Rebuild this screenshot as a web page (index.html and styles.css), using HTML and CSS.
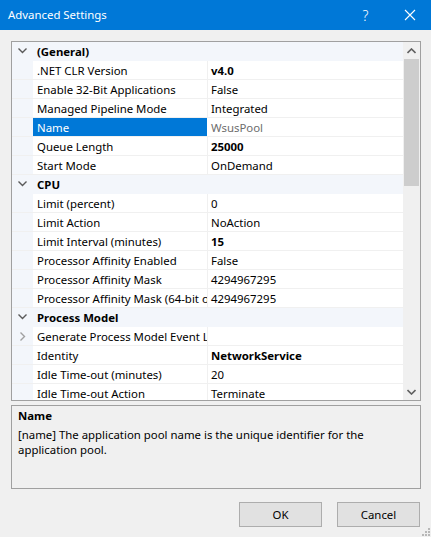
FILE: index.html
```html
<!DOCTYPE html>
<html>
<head>
<meta charset="utf-8">
<link rel="stylesheet" href="styles.css">
</head>
<body>
<div class="window">
  <div class="titlebar">
    <div class="title">Advanced Settings</div>
    <div class="tbtn help">?</div>
    <div class="tbtn close">
      <svg width="12" height="12" viewBox="0 0 12 12"><path d="M1 1L11 11M11 1L1 11" stroke="#fff" stroke-width="1.1" fill="none"/></svg>
    </div>
  </div>
  <div class="content">
    <div class="grid">
      <div class="rows">
        <div class="row cat"><span class="gut"><svg width="9" height="6" viewBox="0 0 9 6"><path d="M0.5 0.5L4.5 4.5L8.5 0.5" stroke="#5a5a5a" stroke-width="1.4" fill="none"/></svg></span><span class="catname">(General)</span></div>
        <div class="row"><span class="gut"></span><span class="name">.NET CLR Version</span><span class="val b">v4.0</span></div>
        <div class="row"><span class="gut"></span><span class="name">Enable 32-Bit Applications</span><span class="val">False</span></div>
        <div class="row"><span class="gut"></span><span class="name">Managed Pipeline Mode</span><span class="val">Integrated</span></div>
        <div class="row sel"><span class="gut"></span><span class="name">Name</span><span class="val">WsusPool</span></div>
        <div class="row"><span class="gut"></span><span class="name">Queue Length</span><span class="val b">25000</span></div>
        <div class="row"><span class="gut"></span><span class="name">Start Mode</span><span class="val">OnDemand</span></div>
        <div class="row cat"><span class="gut"><svg width="9" height="6" viewBox="0 0 9 6"><path d="M0.5 0.5L4.5 4.5L8.5 0.5" stroke="#5a5a5a" stroke-width="1.4" fill="none"/></svg></span><span class="catname">CPU</span></div>
        <div class="row"><span class="gut"></span><span class="name">Limit (percent)</span><span class="val">0</span></div>
        <div class="row"><span class="gut"></span><span class="name">Limit Action</span><span class="val">NoAction</span></div>
        <div class="row"><span class="gut"></span><span class="name">Limit Interval (minutes)</span><span class="val b">15</span></div>
        <div class="row"><span class="gut"></span><span class="name">Processor Affinity Enabled</span><span class="val">False</span></div>
        <div class="row"><span class="gut"></span><span class="name">Processor Affinity Mask</span><span class="val">4294967295</span></div>
        <div class="row"><span class="gut"></span><span class="name">Processor Affinity Mask (64-bit option)</span><span class="val">4294967295</span></div>
        <div class="row cat"><span class="gut"><svg width="9" height="6" viewBox="0 0 9 6"><path d="M0.5 0.5L4.5 4.5L8.5 0.5" stroke="#5a5a5a" stroke-width="1.4" fill="none"/></svg></span><span class="catname">Process Model</span></div>
        <div class="row"><span class="gut"><svg width="6" height="9" viewBox="0 0 6 9"><path d="M0.5 0.5L4.5 4.5L0.5 8.5" stroke="#a0a0a0" stroke-width="1.4" fill="none"/></svg></span><span class="name">Generate Process Model Event Log Entry</span><span class="val"></span></div>
        <div class="row"><span class="gut"></span><span class="name">Identity</span><span class="val b">NetworkService</span></div>
        <div class="row"><span class="gut"></span><span class="name">Idle Time-out (minutes)</span><span class="val">20</span></div>
        <div class="row"><span class="gut"></span><span class="name">Idle Time-out Action</span><span class="val">Terminate</span></div>
      </div>
      <div class="scrollbar">
        <div class="arrow"><svg width="9" height="6" viewBox="0 0 9 6"><path d="M0.5 5L4.5 1L8.5 5" stroke="#606060" stroke-width="1.6" fill="none"/></svg></div>
        <div class="track"><div class="thumb"></div></div>
        <div class="arrow"><svg width="9" height="6" viewBox="0 0 9 6"><path d="M0.5 1L4.5 5L8.5 1" stroke="#606060" stroke-width="1.6" fill="none"/></svg></div>
      </div>
    </div>
    <div class="desc">
      <div class="dtitle">Name</div>
      <div class="dtext">[name] The application pool name is the unique identifier for the application pool.</div>
    </div>
    <div class="buttons">
      <div class="btn">OK</div>
      <div class="btn">Cancel</div>
    </div>
  </div>
  <svg class="grip" width="10" height="10" viewBox="0 0 10 10">
    <rect x="8" y="2" width="2" height="2" fill="#b8b8b8"/>
    <rect x="5" y="5" width="2" height="2" fill="#b8b8b8"/>
    <rect x="8" y="5" width="2" height="2" fill="#b8b8b8"/>
    <rect x="2" y="8" width="2" height="2" fill="#b8b8b8"/>
    <rect x="5" y="8" width="2" height="2" fill="#b8b8b8"/>
    <rect x="8" y="8" width="2" height="2" fill="#b8b8b8"/>
  </svg>
</div>
</body>
</html>
```
FILE: styles.css
```css
* { box-sizing: border-box; }
html, body { margin: 0; padding: 0; }
body {
  width: 431px;
  height: 537px;
  overflow: hidden;
  background: #f0f0f0;
  font-family: "Noto Sans", "Open Sans", sans-serif;
  font-size: 11.4px;
  color: #000;
}
.window { position: relative; width: 431px; height: 537px; }
.titlebar {
  height: 30px;
  background: #0078d7;
  color: #fff;
  display: flex;
  align-items: center;
}
.title { flex: 1; padding-left: 8px; font-size: 11.4px; padding-bottom: 1px; }
.tbtn {
  width: 45px;
  height: 30px;
  display: flex;
  align-items: center;
  justify-content: center;
}
.help { font-size: 14px; font-weight: 300; }
.close { width: 43px; }
.content { padding: 11px 10px 0 11px; }
.grid {
  height: 360px;
  border: 1px solid #a0a0a0;
  display: flex;
  background: #fff;
  overflow: hidden;
}
.rows { width: 391px; overflow: hidden; }
.row {
  height: 19px;
  display: flex;
  border-bottom: 1px solid #f0f0f0;
  line-height: 17px;
  padding-top: 1px;
  white-space: nowrap;
}
.gut {
  width: 21px;
  flex: none;
  background: #f3f6fb;
  display: flex;
  align-items: center;
  justify-content: center;
  margin-top: -1px;
}
.row.cat { background: #f3f6fb; border-bottom-color: #f3f6fb; }
.catname { font-weight: bold; padding-left: 4px; }
.name {
  width: 175px;
  flex: none;
  padding-left: 4px;
  overflow: hidden;
  border-right: 1px solid #f0f0f0;
  margin-top: -1px;
  padding-top: 1px;
}
.val { flex: 1; padding-left: 3px; overflow: hidden; }
.b { font-weight: bold; }
.sel .name { background: #0078d7; color: #fff; border-right-color: #fff; }
.sel .val { color: #6d6d6d; }
.scrollbar {
  width: 17px;
  flex: none;
  background: #f0f0f0;
  display: flex;
  flex-direction: column;
}
.arrow { height: 17px; display: flex; align-items: center; justify-content: center; }
.track { flex: 1; padding: 0 1px; }
.thumb { height: 127px; background: #cdcdcd; }
.desc {
  margin-top: 4px;
  height: 84px;
  border: 1px solid #a0a0a0;
  padding: 2px 6px;
}
.dtitle { font-weight: bold; line-height: 16px; }
.dtext { line-height: 15px; margin-top: 3px; padding-right: 8px; }
.buttons {
  margin-top: 13px;
  display: flex;
  justify-content: flex-end;
  gap: 15px;
  padding-right: 1px;
}
.btn {
  width: 83px;
  height: 25px;
  background: #e1e1e1;
  border: 1px solid #adadad;
  display: flex;
  align-items: center;
  justify-content: center;
}
.grip { position: absolute; right: 1px; bottom: 1px; }
```
